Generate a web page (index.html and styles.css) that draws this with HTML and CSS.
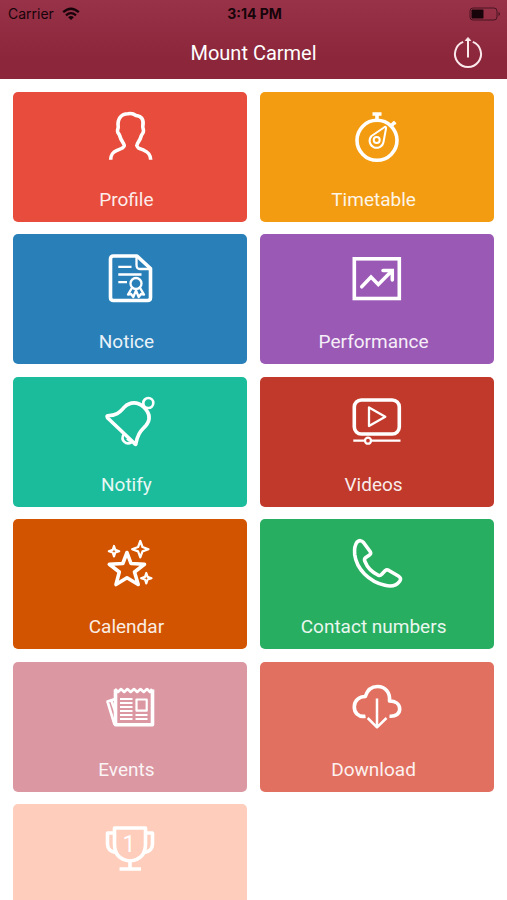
FILE: index.html
```html
<!DOCTYPE html>
<html lang="en">
<head>
<meta charset="utf-8">
<meta name="viewport" content="width=device-width, initial-scale=1">
<title>Mount Carmel</title>
<link rel="stylesheet" href="styles.css">
</head>
<body>
<header class="top">
  <div class="status">
    <div class="carrier">
      <span>Carrier</span>
      <svg class="wifi" viewBox="0 0 18 13" aria-hidden="true"><path d="M1.2 5.2Q9-1.8 16.8 5.2M4 8.3Q9 4 14 8.3" fill="none" stroke="currentColor" stroke-width="2.3"/><path d="M6.1 10.2Q9 7.9 11.9 10.2L9 13z" fill="currentColor"/></svg>
    </div>
    <span class="time">3:14 PM</span>
    <svg class="battery" viewBox="0 0 32 14" aria-hidden="true"><rect x="1" y="1" width="27" height="12" rx="3" fill="none" stroke="currentColor" opacity=".6"/><rect x="2.5" y="2.5" width="12" height="9" rx="1" fill="currentColor"/><path d="M29.5 5v4q1.5-.7 1.5-2t-1.5-2" fill="currentColor" opacity=".6"/></svg>
  </div>
  <div class="nav">
    <h1 class="title">Mount Carmel</h1>
    <button class="logout" type="button" aria-label="Log out">
      <svg viewBox="0 0 30 32" aria-hidden="true"><path d="M10.200 4.900A13 13 0 1 0 19.800 4.900M15 4v16.500" stroke-width="2"/><path d="M12.300 3.500L15 .5l2.700 3z" fill="currentColor" stroke-width="1"/></svg>
    </button>
  </div>
</header>
<main class="grid">
  <a class="tile profile" href="#profile">
    <svg class="icon" viewBox="0 0 50 50" aria-hidden="true"><path d="M5.700 48.700C5.800 43 8 41 12 39.300C16 37.700 19.500 36.800 19.300 34.500C19 31.700 16 30 14.800 25C14.300 22.500 13 23 12.600 20.500C12.200 18 13.500 17.500 13.200 15.500C12.200 8 16 2.800 23 2.800C26 2 29 3 31 4.500C37 5 39 9 37.800 15.500C37.600 17.500 38.800 18 38.400 20.500C38 23 36.800 22.500 36.200 25C35 30 32 31.700 31.900 34.500C31.700 36.800 35 37.700 39 39.300C43 41 45.500 43 45.700 48.700"/></svg>
    <span class="label">Profile</span>
  </a>
  <a class="tile timetable" href="#timetable">
    <svg class="icon" viewBox="0 0 50 50" aria-hidden="true"><circle cx="25" cy="29.300" r="20"/><path d="M20.500 3h9M25 3v6M39.500 14.500l3-3"/><path stroke-width="2" d="M41.300 10.500l2.500 2.500M32 16.500C33.300 15.300 34.300 16 34 17.500L31.500 31A7 7 0 1 1 19.500 25z"/><circle cx="24.700" cy="29" r="3" stroke-width="2"/></svg>
    <span class="label">Timetable</span>
  </a>
  <a class="tile notice" href="#notice">
    <svg class="icon" viewBox="0 0 50 50" aria-hidden="true"><path d="M8.500 3H32L45.500 15.500V44.500Q45.500 47.500 42.500 47.500H8.500Q5.500 47.500 5.500 44.500V6Q5.500 3 8.500 3z"/><path stroke-width="2.300" d="M31.500 3.500V12Q31.500 16 35 16H45M13.300 13.800H26.500M13.300 21.500H36.500M13.300 29.200H22"/><circle cx="31" cy="30.500" r="5.500" stroke-width="2.300"/><path stroke-width="2.300" d="M27 34.800L23 41.500L26 41L28.300 44L31 37.500L33.700 44L36 41L39 41.500L35 34.800"/></svg>
    <span class="label">Notice</span>
  </a>
  <a class="tile performance" href="#performance">
    <svg class="icon square" viewBox="0 0 50 50" aria-hidden="true"><rect x="2.300" y="5.800" width="45" height="39.700"/><path stroke-width="3.500" stroke-linecap="round" d="M9.700 33.800L19 24L26.300 31.500L39.700 18M31 17.500H40.300V27"/></svg>
    <span class="label">Performance</span>
  </a>
  <a class="tile notify" href="#notify">
    <svg class="icon" viewBox="0 0 50 50" aria-hidden="true"><circle cx="43.300" cy="7" r="5" stroke-width="2.600"/><path d="M2.500 19.700C13 19.500 15 15.500 19.500 11C25 5.500 33 5.500 38.500 11C45 17 46 23.500 40.500 30C36 35 33 36.500 30.700 48.300Q30 48.600 28.500 46.500L2.700 22Q1.500 20 2.500 19.700z"/><path stroke-width="2.600" d="M18.500 38.500C15.500 44 20.500 49.500 26.500 46.500M22 42.500l3 2.500"/></svg>
    <span class="label">Notify</span>
  </a>
  <a class="tile videos" href="#videos">
    <svg class="icon" viewBox="0 0 50 50" aria-hidden="true"><rect x="2.300" y="4" width="45" height="34" rx="7"/><path stroke-width="2.300" d="M17 11.500L33.300 20.700L17 30zM1.300 44.700H13M19.300 44.700H48.500"/><circle cx="16" cy="44.700" r="3" stroke-width="2.300"/></svg>
    <span class="label">Videos</span>
  </a>
  <a class="tile calendar" href="#calendar">
    <svg class="icon" viewBox="0 0 50 50" aria-hidden="true"><path d="M22 14.500L26 25.500L39.500 26.300L29.500 34L33.200 46.500L22 39.800L11 46.500L14.300 34L4.300 26.300L17.800 25.500z"/><path stroke-width="2.200" d="M35.300 3L37.500 9L43.500 11.200L37.500 13.400L35.300 19.400L33.100 13.400L27.100 11.200L33.100 9zM9 8L10.300 11.900L14.200 13.200L10.300 14.500L9 18.400L7.700 14.500L3.800 13.200L7.700 11.900zM41.300 35L42.600 38.900L46.500 40.200L42.600 41.500L41.300 45.400L40 41.500L36.100 40.200L40 38.900z"/></svg>
    <span class="label">Calendar</span>
  </a>
  <a class="tile contact" href="#contact">
    <svg class="icon" viewBox="0 0 50 50" aria-hidden="true"><path d="M5 4.200Q8.500 1 11.500 4.500L18.300 13.800Q19.200 15.500 17.800 16.700L13.500 19.700Q12 21 12.800 23.200C15 29 20 34.500 26.500 37.300Q28.300 38 29.500 36.500L33.300 32.500Q34.700 31.300 36.500 32.200L46.300 38Q50 40.300 47.700 43.200C44 48.300 38.500 48.700 33 47.300C17 43.500 4.500 31 2.700 16.500Q2 8 5 4.200z"/></svg>
    <span class="label">Contact numbers</span>
  </a>
  <a class="tile events" href="#events">
    <svg class="icon" viewBox="0 0 50 50" aria-hidden="true"><path d="M10.500 8.500V43.700H47.500V8.500"/><path stroke-width="2.600" d="M10 8l3 3 3-3 3.200 3 3.200-3 3.300 3 3.300-3 3.200 3 3.300-3 3.200 3 3.300-3 3 3 2-3M10 18L2.500 20.500L9.500 43.500M6.500 20L10 30"/><path stroke-width="2.200" d="M15 18h12.500M15 22h12.500M15 26h12.500M15 30h12.500M15 34h12.500M15 38h12.500M30.500 34h12M30.500 38h12M31.500 18.500h10.200v11.200h-10.200z"/></svg>
    <span class="label">Events</span>
  </a>
  <a class="tile download" href="#download">
    <svg class="icon" viewBox="0 0 50 50" aria-hidden="true"><path d="M13.500 35.200C6.500 36.500 2 31.500 2.300 25.500C2.500 19 7.500 15.500 13.300 15.500C15.500 8.500 19.500 5.500 25.500 5.500C33.500 5.500 38.300 11.500 37.500 20C43.500 20 47.700 23 47.700 28C47.700 32.500 44 35.700 37.500 35.200"/><path stroke-width="2.500" d="M25 17.500V46M15.700 37L25 46.300L34.500 37"/></svg>
    <span class="label">Download</span>
  </a>
  <a class="tile awards" href="#awards" aria-label="Awards">
    <svg class="icon" viewBox="0 0 50 50" aria-hidden="true"><path d="M9.500 5H40.500V21C40.500 32 34 37 25 38C16 37 9.500 32 9.500 21zM25 38V45M14.500 46H36"/><path d="M9.500 10H2.500V21Q2.500 28.500 12 30M40.500 10H47.500V21Q47.500 28.500 38 30"/><text class="rank" x="24" y="29" text-anchor="middle">1</text></svg>
  </a>
</main>
</body>
</html>
```

FILE: styles.css
```css
* {
  box-sizing: border-box;
}

body {
  margin: 0;
  height: 100vh;
  overflow: hidden;
  display: flex;
  flex-direction: column;
  background: #fff;
  font-family: Roboto, sans-serif;
}

.top {
  flex: none;
  color: #fff;
  background: linear-gradient(#983248, #8b263b 75%);
}

.status {
  display: grid;
  grid-template-columns: 1fr auto 1fr;
  align-items: center;
  height: 27px;
  padding: 0 6px 0 8px;
  color: #16040a;
  font-family: Inter, sans-serif;
  font-size: 14px;
}

.carrier {
  display: flex;
  align-items: center;
  gap: 8px;
}

.wifi {
  width: 18px;
  height: 13px;
}

.time {
  font-weight: 700;
}

.battery {
  justify-self: end;
  width: 32px;
  height: 14px;
}

.nav {
  display: grid;
  grid-template-columns: 1fr auto 1fr;
  align-items: center;
  height: 52px;
  padding: 0 24px;
}

.title {
  grid-column: 2;
  margin: 0;
  font-size: 20px;
  font-weight: 400;
}

.logout {
  justify-self: end;
  width: 30px;
  height: 32px;
  padding: 0;
  border: 0;
  background: none;
  color: #fbe9ec;
}

.logout svg {
  display: block;
  overflow: visible;
  fill: none;
  stroke: currentColor;
}

.grid {
  flex: 1;
  min-height: 0;
  overflow-y: auto;
  scrollbar-width: none;
  display: grid;
  grid-template-columns: 1fr 1fr;
  align-content: start;
  gap: 2.5vw;
  padding: 2.5vw;
}

.tile {
  display: flex;
  flex-direction: column;
  align-items: center;
  gap: 27px;
  aspect-ratio: 65 / 36;
  padding-top: 19px;
  border-radius: 5px;
  color: #fff;
  text-decoration: none;
}

.icon {
  flex: none;
  width: 50px;
  height: 50px;
  overflow: visible;
  fill: none;
  stroke: currentColor;
  stroke-width: 3.6px;
  stroke-linejoin: round;
}

.square {
  stroke-linejoin: miter;
}

.rank {
  font-size: 23px;
  font-weight: 400;
  fill: currentColor;
  stroke: none;
}

.label {
  padding-right: 7px;
  font-size: 19px;
  line-height: 24px;
  opacity: 0.9;
}

.profile { background: #e74c3c; }
.timetable { background: #f39c12; }
.notice { background: #2980b9; }
.performance { background: #9b59b6; }
.notify { background: #1abc9c; }
.videos { background: #c0392b; }
.calendar { background: #d35400; }
.contact { background: #27ae60; }
.events { background: #db98a3; }
.download { background: #e27060; }
.awards { background: #fecdbb; }
```
